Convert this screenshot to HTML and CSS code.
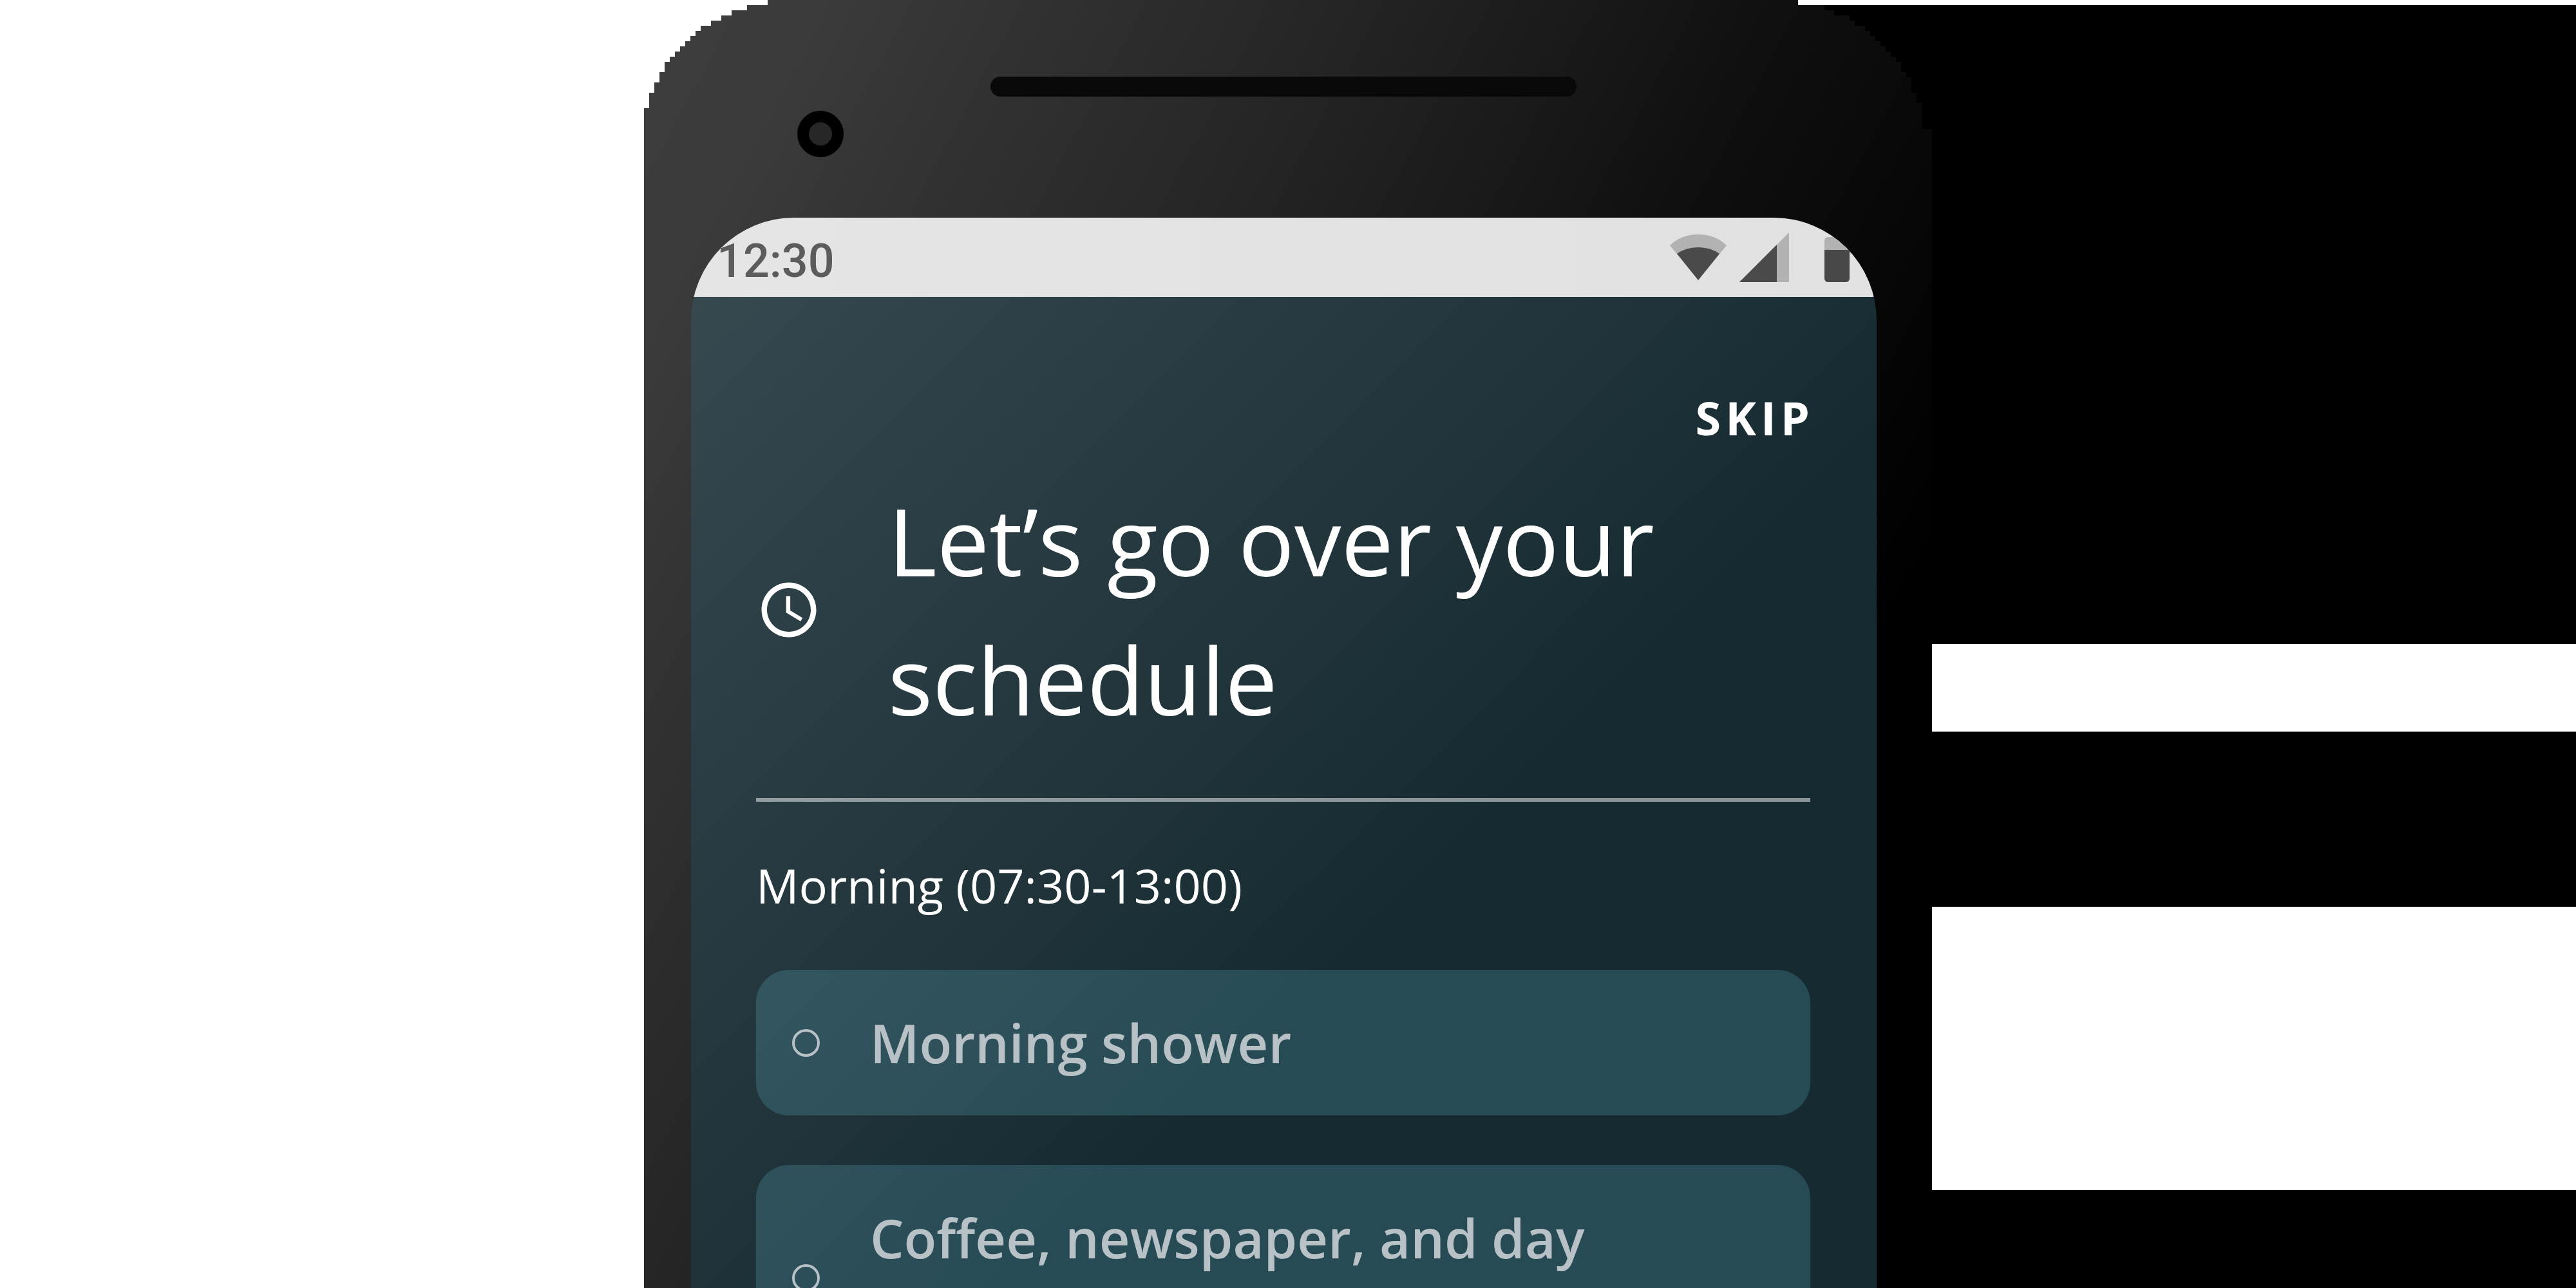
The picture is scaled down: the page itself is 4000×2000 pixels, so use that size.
FILE: index.html
```html
<!DOCTYPE html>
<html lang="en">
<head>
<meta charset="utf-8">
<title>Schedule</title>
<link rel="stylesheet" href="styles.css">
</head>
<body>
<div class="stage">
  <main class="phone">
    <svg class="corner corner-left" viewBox="0 0 192 168" aria-hidden="true"><path fill="#fff" d="M0 0H192V8H160V16H136V24H120V32H104V40H88V48H80V56H72V64H64V72H56V80H48V88H40V96H32V112H24V128H16V144H8V168H0Z"/></svg>
    <svg class="corner corner-right" viewBox="0 0 208 200" aria-hidden="true"><path fill="#000" d="M0 8H41V16H56V24H80V32H88V40H104V48H112V56H120V64H128V72H136V80H144V88H152V96H160V112H168V120H176V144H184V160H192V200H208V0H0Z"/><path fill="#fff" d="M0 0H208V8H0Z"/></svg>
    <div class="bezel">
      <span class="camera"></span>
      <span class="speaker"></span>
    </div>
    <div class="screen">
      <header class="status">
        <time class="clock">12:30</time>
        <svg class="indicators" viewBox="0 0 280 78" aria-hidden="true">
          <path fill="#b2b2b2" d="M1 21Q19 4 45 4T89 21L45 75Z"/>
          <path fill="#4a4a4a" d="M12 34Q26 24 45 24T78 34L45 75Z"/>
          <path fill="#b2b2b2" d="M186 1V78H109Z"/>
          <path fill="#4a4a4a" d="M167 20V78H109Z"/>
          <path fill="#b2b2b2" d="M241 28V14Q241 8 247 8H274Q280 8 280 14V28Z"/>
          <path fill="#484848" d="M241 28H280V72Q280 78 274 78H247Q241 78 241 72Z"/>
        </svg>
      </header>
      <div class="content">
        <button class="skip" type="button">SKIP</button>
        <div class="heading">
          <svg class="heading-icon" viewBox="0 0 24 24" aria-hidden="true"><path fill="#fff" d="M11.99 2C6.47 2 2 6.48 2 12s4.47 10 9.99 10C17.52 22 22 17.52 22 12S17.52 2 11.99 2zM12 20c-4.42 0-8-3.58-8-8s3.58-8 8-8 8 3.58 8 8-3.58 8-8 8zM12.5 7H11v6l5.25 3.15.75-1.23-4.5-2.67z"/></svg>
          <h1 class="title">Let’s go over your schedule</h1>
        </div>
        <hr class="divider">
        <h2 class="section">Morning (07:30-13:00)</h2>
        <div class="tasks">
          <label class="task"><input class="dot" type="radio" name="shower"><span>Morning shower</span></label>
          <label class="task task-tall"><input class="dot" type="radio" name="coffee"><span>Coffee, newspaper, and day</span></label>
        </div>
      </div>
    </div>
  </main>
  <aside class="bands"><div class="band"></div><div class="band"></div></aside>
</div>
</body>
</html>
```
FILE: styles.css
```css
* { box-sizing: border-box; }

body {
  margin: 0;
  background: #fff;
  font-family: "Open Sans", "Noto Sans", sans-serif;
  color: #fff;
}

.stage {
  display: grid;
  grid-template-columns: 1fr 2fr 1fr;
  height: 100vh;
  overflow: hidden;
}

.phone {
  grid-column: 2;
  position: relative;
  background: linear-gradient(118deg, #3d3d3d 0, #3b3b3b 250px, #333 484px, #262626 925px, #171717 1367px, #101010 1548px, #080808 1862px, #000 2150px);
}

.corner { position: absolute; top: 0; }
.corner-left { left: 0; width: 192px; }
.corner-right { right: 0; width: 208px; }

.bezel {
  display: flex;
  align-items: flex-start;
  gap: 228px;
  height: 338px;
  padding: 119px 0 0 238px;
}

.camera {
  width: 72px;
  height: 72px;
  margin-top: 53px;
  border: 18px solid #000;
  border-radius: 50%;
  background: #272727;
}

.speaker {
  width: 910px;
  height: 31px;
  border-radius: 16px;
  background: #090909;
}

.screen {
  margin: 0 86px 0 73px;
  border-radius: 160px 160px 0 0;
  overflow: hidden;
}

.status {
  display: flex;
  align-items: flex-start;
  justify-content: space-between;
  height: 123px;
  padding: 22px 42px 0 40px;
  background: linear-gradient(90deg, #e5e5e5, #e1e1e1);
}

.clock {
  font: 500 72px/92px Roboto, sans-serif;
  color: #5c5c5c;
}

.indicators { width: 280px; height: 78px; }

.content {
  min-height: 1600px;
  padding: 133px 103px 77px 101px;
  background: linear-gradient(135deg, #37484f 0, #162b31 1450px);
}

.skip {
  display: block;
  margin: 0 -6px 29px auto;
  padding: 0;
  border: 0;
  background: none;
  color: inherit;
  font: 700 72px/108px "Open Sans", sans-serif;
  letter-spacing: 7px;
}

.heading {
  display: flex;
  align-items: center;
  gap: 103px;
}

.heading-icon { flex: none; width: 102px; }

.title {
  margin: 0;
  font-size: 145px;
  font-weight: 400;
  line-height: 216px;
}

.divider {
  height: 6px;
  margin: 76px 0;
  border: 0;
  background: rgba(255, 255, 255, 0.5);
}

.section {
  margin: 0 0 77px;
  font-size: 74px;
  font-weight: 400;
  line-height: 108px;
}

.tasks { display: grid; gap: 77px; }

.task {
  display: flex;
  align-items: center;
  gap: 78px;
  padding: 51px 56px;
  border-radius: 51px;
  background: rgba(112, 203, 229, 0.2);
  color: #b8c2c6;
  font-size: 83px;
  font-weight: 600;
  line-height: 124px;
}

.task-tall { height: 350px; }
.task-tall span { align-self: flex-start; }

.dot {
  appearance: none;
  flex: none;
  width: 43px;
  height: 43px;
  margin: 0;
  border: 4px solid #b8c2c6;
  border-radius: 50%;
}

.bands {
  display: grid;
  grid-template-rows: 136px 440px;
  gap: 272px;
  margin-top: 8px;
  padding-top: 992px;
  background: #000;
}

.band { background: #fff; }
```
